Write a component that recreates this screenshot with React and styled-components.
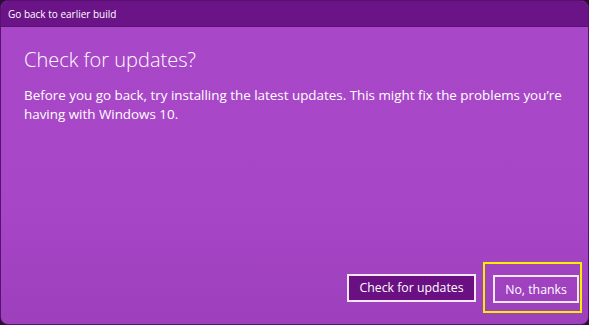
import styled, { createGlobalStyle } from "styled-components";

const GlobalStyle = createGlobalStyle`
  html, body {
    margin: 0;
    padding: 0;
    background: #2a0f33;
  }
  body {
    font-family: "Open Sans", "Noto Sans", sans-serif;
  }
`;

const Window = styled.div`
  width: 589px;
  height: 325px;
  box-sizing: border-box;
  display: flex;
  flex-direction: column;
  border-radius: 8px;
  overflow: hidden;
  border: 1px solid #5a1070;
  background: linear-gradient(180deg, #a947c9 0%, #a846c8 60%, #9d40bc 100%);
  color: #fff;
`;

const TitleBar = styled.div`
  height: 25px;
  flex: none;
  display: flex;
  align-items: center;
  padding-left: 7px;
  background: #6b1488;
  border-bottom: 1px solid #5e0f78;
  font-size: 10px;
`;

const Body = styled.div`
  flex: 1;
  display: flex;
  flex-direction: column;
  padding: 19px 0 0 23px;
`;

const Heading = styled.h1`
  margin: 0;
  font-size: 20px;
  font-weight: 300;
  line-height: 28px;
`;

const Text = styled.p`
  margin: 12px 0 0;
  font-size: 13.4px;
  line-height: 19px;
  max-width: 556px;
`;

const Footer = styled.div`
  margin-top: auto;
  display: flex;
  justify-content: flex-end;
  align-items: center;
  gap: 7px;
  padding: 0 6px 11px 0;
`;

const Button = styled.button`
  height: 28px;
  width: ${(p) => p.$width}px;
  padding: 0;
  box-sizing: border-box;
  border: 2px solid #f4e8f7;
  background: ${(p) => (p.$primary ? "#6a1083" : "transparent")};
  color: #fff;
  font-family: inherit;
  font-size: 12.3px;
  cursor: pointer;
`;

const Focus = styled.div`
  display: flex;
  padding: 11px 1px 8px 8px;
  border: 2px solid #f6f000;
`;

export default function App() {
  return (
    <>
      <GlobalStyle />
      <Window>
        <TitleBar>Go back to earlier build</TitleBar>
        <Body>
          <Heading>Check for updates?</Heading>
          <Text>
            Before you go back, try installing the latest updates. This might fix the problems you’re having with Windows 10.
          </Text>
          <Footer>
            <Button $primary $width={129}>Check for updates</Button>
            <Focus>
              <Button $width={86}>No, thanks</Button>
            </Focus>
          </Footer>
        </Body>
      </Window>
    </>
  );
}
